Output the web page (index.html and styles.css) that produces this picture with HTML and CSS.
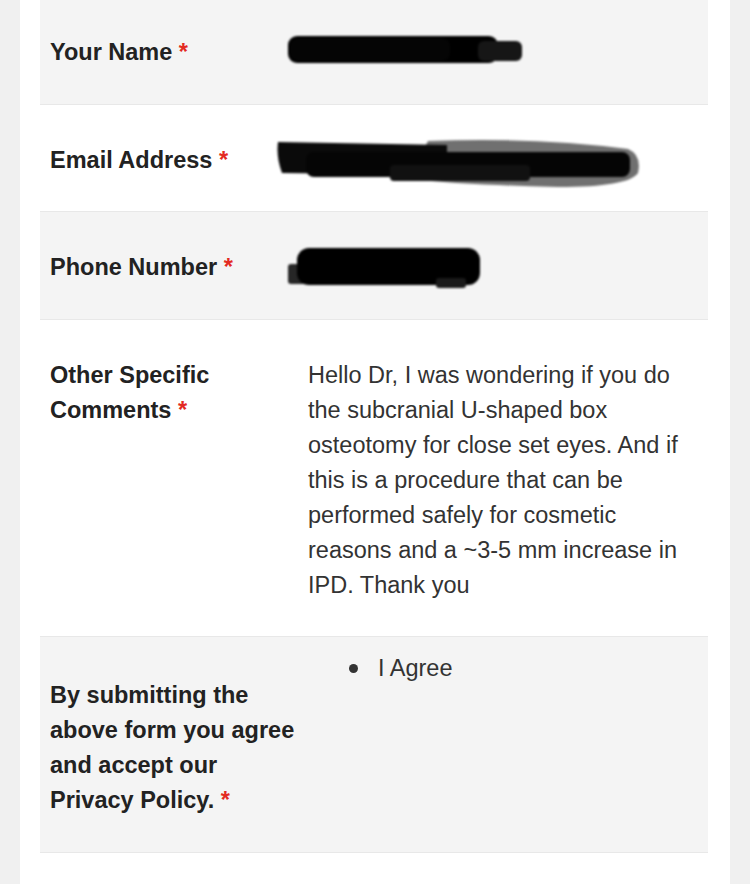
FILE: index.html
```html
<!DOCTYPE html>
<html lang="en">
<head>
  <meta charset="UTF-8">
  <title>Contact Form</title>
  <meta name="viewport" content="width=device-width, initial-scale=1.0" />
  <link rel="stylesheet" href="styles.css">
</head>
<body>

  <div class="page">
    <form class="contact-form">

      <div class="field alt">
        <label>Your Name <span class="req">*</span></label>
        <div class="value">
          <svg class="scribble" width="360" height="35" aria-hidden="true">
            <rect x="-20" y="1" width="210" height="27" rx="9" fill="#000"/>
            <rect x="170" y="6" width="44" height="20" rx="6" fill="#161616"/>
            <rect x="-18" y="3" width="160" height="23" rx="8" fill="#050505"/>
          </svg>
        </div>
      </div>

      <div class="field">
        <label>Email Address <span class="req">*</span></label>
        <div class="value">
          <svg class="scribble" width="360" height="35" aria-hidden="true">
            <path d="M120 -2 Q230 -6 320 6 Q334 12 330 30 Q320 44 250 44 Q160 42 100 36 Z" fill="#707070"/>
            <path d="M-30 -1 L139 2 L139 32 L-26 30 Q-32 14 -30 -1 Z" fill="#0a0a0a"/>
            <rect x="-2" y="9" width="324" height="25" rx="8" fill="#050505"/>
            <rect x="82" y="22" width="140" height="16" rx="4" fill="#111"/>
          </svg>
        </div>
      </div>

      <div class="field alt">
        <label>Phone Number <span class="req">*</span></label>
        <div class="value">
          <svg class="scribble" width="360" height="35" aria-hidden="true">
            <rect x="-20" y="14" width="24" height="20" rx="3" fill="#262626"/>
            <rect x="-11" y="-2" width="183" height="37" rx="12" fill="#000"/>
            <rect x="128" y="28" width="30" height="10" rx="3" fill="#1a1a1a"/>
          </svg>
        </div>
      </div>

      <div class="field">
        <label>Other Specific Comments <span class="req">*</span></label>
        <div class="value">Hello Dr, I was wondering if you do the subcranial U-shaped box osteotomy for close set eyes. And if this is a procedure that can be performed safely for cosmetic reasons and a ~3-5 mm increase in IPD. Thank you</div>
      </div>

      <div class="field alt consent">
        <label>By submitting the above form you agree and accept our <a href="#" class="policy">Privacy Policy.</a> <span class="req">*</span></label>
        <div class="value">
          <ul class="choices">
            <li>I Agree</li>
          </ul>
        </div>
      </div>

    </form>
  </div>

</body>
</html>
```

FILE: styles.css
```css
* {
  box-sizing: border-box;
}

body {
  margin: 0;
  background-color: #f0f0f0;
  font-family: "Liberation Sans", Arial, Helvetica, sans-serif;
  font-size: 23.5px;
  line-height: 35px;
}

.page {
  background-color: white;
  margin: 0 20px;
  padding: 0 22px 40px 20px;
  min-height: 884px;
}

.contact-form {
  margin-top: -3px;
}

.field {
  display: grid;
  grid-template-columns: 248px 385px;
  column-gap: 10px;
  padding: 38px 10px 33.5px;
  border-bottom: 1px solid #e8e8e8;
}

.field.alt {
  background-color: #f4f4f4;
}

label {
  font-weight: bold;
  color: #222;
}

.req {
  color: #e32a22;
}

.value {
  color: #333;
}

.scribble {
  display: block;
  overflow: visible;
  filter: blur(0.9px);
}

.policy {
  color: #222;
  text-decoration: none;
  white-space: nowrap;
}

/* Consent row */
.consent {
  padding: 14px 10px 34px;
}

.consent label {
  margin-top: 27px;
}

.choices {
  margin: 0;
  padding-left: 41px;
  list-style: none;
}

.choices li {
  display: flex;
  align-items: center;
}

.choices li::before {
  content: "";
  width: 9px;
  height: 9px;
  margin-right: 20px;
  border-radius: 50%;
  background-color: #333;
}
```
